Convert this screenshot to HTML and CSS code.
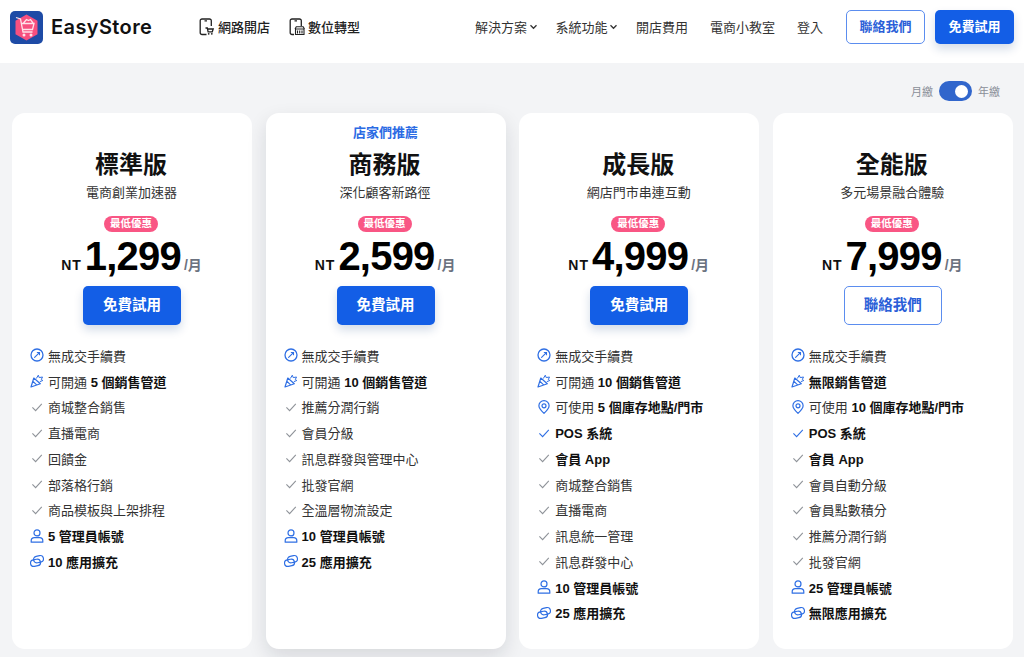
FILE: index.html
```html
<!DOCTYPE html>
<html lang="zh-Hant">
<head>
<meta charset="utf-8">
<title>EasyStore</title>
<link rel="stylesheet" href="styles.css">
</head>
<body>
<svg class="defs" width="0" height="0" aria-hidden="true">
  <symbol id="i-fee" viewBox="0 0 14 14"><circle cx="7" cy="7" r="6" fill="none" stroke="currentColor" stroke-width="1.3"/><path d="M4.600 9.400 9.400 4.600M7.300 4.500h2.200v2.200" fill="none" stroke="currentColor" stroke-width="1.100" stroke-linecap="round"/></symbol>
  <symbol id="i-horn" viewBox="0 0 14 14"><path d="M1 13 3.800 4 10.300 9.800zM3 7.400l3.600 3.500" fill="none" stroke="currentColor" stroke-width="1.200" stroke-linejoin="round"/><path d="M6.500 4.200l1.800-3 .9 2.400 3.300-.6-1.200 2.500 1.500 1-2.600 1" fill="none" stroke="currentColor" stroke-width="1" stroke-linejoin="round" stroke-linecap="round"/></symbol>
  <symbol id="i-pin" viewBox="0 0 14 14"><path d="M7 13.400C4.400 11 1.900 8.500 1.900 5.800a5.100 5.100 0 0 1 10.200 0C12.100 8.500 9.600 11 7 13.400z" fill="none" stroke="currentColor" stroke-width="1.200"/><circle cx="7" cy="5.800" r="2" fill="none" stroke="currentColor" stroke-width="1.200"/></symbol>
  <symbol id="i-check" viewBox="0 0 14 14"><path d="M2.400 7.400 5.600 10.600 11.800 3.800" fill="none" stroke="currentColor" stroke-width="1.100"/></symbol>
  <symbol id="i-user" viewBox="0 0 14 14"><circle cx="7" cy="3.900" r="3" fill="none" stroke="currentColor" stroke-width="1.200"/><path d="M1.200 13.200v-1.500c0-1.900 1.500-3.100 3.200-3.100h5.200c1.700 0 3.200 1.200 3.200 3.100v1.500z" fill="none" stroke="currentColor" stroke-width="1.200" stroke-linejoin="round"/></symbol>
  <symbol id="i-apps" viewBox="0 0 14 14"><rect x="3.500" y="1.900" width="10" height="6.600" rx="3.300" transform="rotate(-12 8.500 5.200)" fill="none" stroke="currentColor" stroke-width="1.200"/><rect x=".5" y="5.500" width="10" height="6.600" rx="3.300" transform="rotate(-12 5.500 8.800)" fill="none" stroke="currentColor" stroke-width="1.200"/></symbol>
  <symbol id="i-chev" viewBox="0 0 8 6"><path d="M1 1.300 4 4.300 7 1.300" fill="none" stroke="currentColor" stroke-width="1.300"/></symbol>
</svg>

<header class="topbar">
  <a class="brand">
    <span class="brand-mark">
      <svg viewBox="0 0 33 33" width="33" height="33">
        <rect width="33" height="33" rx="5" fill="#1e4ba6"/>
        <path d="M16.500 3.500 27.500 9.800v13.400L16.500 29.500 5.500 23.200V9.800z" fill="#f7507f"/>
        <path d="M6 6.500l4.500 1.500 2.500 13h9.500M11.500 12.500h12.500l-1.500 6H12.500M13.500 12l3-3.500 2 1 2-1 2.500 3.500" fill="none" stroke="#ffe3ea" stroke-width="1.300"/>
        <circle cx="14" cy="24" r="1.500" fill="#ffe3ea"/><circle cx="21" cy="24" r="1.500" fill="#ffe3ea"/>
      </svg>
    </span>
    <span class="brand-name">EasyStore</span>
  </a>
  <nav class="nav-left">
    <a class="nav-strong">
      <svg viewBox="0 0 16 18" width="16" height="18"><path d="M7.500 16.500H3a1.800 1.800 0 0 1-1.800-1.800V2.800A1.800 1.800 0 0 1 3 1h7.500a1.800 1.800 0 0 1 1.800 1.800V8M5.500 2.800h2.500" fill="none" stroke="#222" stroke-width="1.300"/><path d="M6.500 10h1.800l.8 3.800h4.200l.9-2.800H8.600" fill="none" stroke="#222" stroke-width="1.300"/><circle cx="9.700" cy="15.800" r=".9" fill="#222"/><circle cx="12.800" cy="15.800" r=".9" fill="#222"/></svg>
      網路開店
    </a>
    <a class="nav-strong">
      <svg viewBox="0 0 16 18" width="16" height="18"><path d="M5 16.500H3a1.800 1.800 0 0 1-1.800-1.800V2.800A1.800 1.800 0 0 1 3 1h7.500a1.800 1.800 0 0 1 1.800 1.800V8M5.500 2.800h2.500" fill="none" stroke="#222" stroke-width="1.300"/><path d="M6.500 11h8.500v5.500H6.500zM6 11l1.300-2.200h6.900L15.500 11M8.500 12.500v3M10.700 12.500v3M13 12.500v3" fill="none" stroke="#222" stroke-width="1.100"/></svg>
      數位轉型
    </a>
  </nav>
  <nav class="nav-right">
    <a class="nav-link">解決方案<svg class="chev"><use href="#i-chev"/></svg></a>
    <a class="nav-link">系統功能<svg class="chev"><use href="#i-chev"/></svg></a>
    <a class="nav-link">開店費用</a>
    <a class="nav-link">電商小教室</a>
    <a class="nav-link">登入</a>
  </nav>
  <a class="btn btn-outline btn-nav">聯絡我們</a>
  <a class="btn btn-solid btn-nav">免費試用</a>
</header>

<main class="page">
  <div class="billing">
    <span>月繳</span>
    <span class="switch"><span class="knob"></span></span>
    <span>年繳</span>
  </div>

  <section class="plans">
    <article class="card">
      <h2>標準版</h2>
      <p class="tagline">電商創業加速器</p>
      <span class="badge">最低優惠</span>
      <div class="price"><span class="cur">NT</span><span class="amount">1,299</span><span class="per">/月</span></div>
      <a class="btn btn-solid btn-cta">免費試用</a>
      <ul class="features">
        <li><svg class="ico blue"><use href="#i-fee"/></svg>無成交手續費</li>
        <li><svg class="ico blue"><use href="#i-horn"/></svg><span>可開通 <b>5 個銷售管道</b></span></li>
        <li><svg class="ico gray"><use href="#i-check"/></svg>商城整合銷售</li>
        <li><svg class="ico gray"><use href="#i-check"/></svg>直播電商</li>
        <li><svg class="ico gray"><use href="#i-check"/></svg>回饋金</li>
        <li><svg class="ico gray"><use href="#i-check"/></svg>部落格行銷</li>
        <li><svg class="ico gray"><use href="#i-check"/></svg>商品模板與上架排程</li>
        <li><svg class="ico blue"><use href="#i-user"/></svg><b>5 管理員帳號</b></li>
        <li><svg class="ico blue"><use href="#i-apps"/></svg><b>10 應用擴充</b></li>
      </ul>
    </article>

    <article class="card featured">
      <span class="ribbon">店家們推薦</span>
      <h2>商務版</h2>
      <p class="tagline">深化顧客新路徑</p>
      <span class="badge">最低優惠</span>
      <div class="price"><span class="cur">NT</span><span class="amount">2,599</span><span class="per">/月</span></div>
      <a class="btn btn-solid btn-cta">免費試用</a>
      <ul class="features">
        <li><svg class="ico blue"><use href="#i-fee"/></svg>無成交手續費</li>
        <li><svg class="ico blue"><use href="#i-horn"/></svg><span>可開通 <b>10 個銷售管道</b></span></li>
        <li><svg class="ico gray"><use href="#i-check"/></svg>推薦分潤行銷</li>
        <li><svg class="ico gray"><use href="#i-check"/></svg>會員分級</li>
        <li><svg class="ico gray"><use href="#i-check"/></svg>訊息群發與管理中心</li>
        <li><svg class="ico gray"><use href="#i-check"/></svg>批發官網</li>
        <li><svg class="ico gray"><use href="#i-check"/></svg>全溫層物流設定</li>
        <li><svg class="ico blue"><use href="#i-user"/></svg><b>10 管理員帳號</b></li>
        <li><svg class="ico blue"><use href="#i-apps"/></svg><b>25 應用擴充</b></li>
      </ul>
    </article>

    <article class="card">
      <h2>成長版</h2>
      <p class="tagline">網店門市串連互動</p>
      <span class="badge">最低優惠</span>
      <div class="price"><span class="cur">NT</span><span class="amount">4,999</span><span class="per">/月</span></div>
      <a class="btn btn-solid btn-cta">免費試用</a>
      <ul class="features">
        <li><svg class="ico blue"><use href="#i-fee"/></svg>無成交手續費</li>
        <li><svg class="ico blue"><use href="#i-horn"/></svg><span>可開通 <b>10 個銷售管道</b></span></li>
        <li><svg class="ico blue"><use href="#i-pin"/></svg><span>可使用 <b>5 個庫存地點/門市</b></span></li>
        <li><svg class="ico blue"><use href="#i-check"/></svg><b>POS 系統</b></li>
        <li><svg class="ico gray"><use href="#i-check"/></svg><b>會員 App</b></li>
        <li><svg class="ico gray"><use href="#i-check"/></svg>商城整合銷售</li>
        <li><svg class="ico gray"><use href="#i-check"/></svg>直播電商</li>
        <li><svg class="ico gray"><use href="#i-check"/></svg>訊息統一管理</li>
        <li><svg class="ico gray"><use href="#i-check"/></svg>訊息群發中心</li>
        <li><svg class="ico blue"><use href="#i-user"/></svg><b>10 管理員帳號</b></li>
        <li><svg class="ico blue"><use href="#i-apps"/></svg><b>25 應用擴充</b></li>
      </ul>
    </article>

    <article class="card">
      <h2>全能版</h2>
      <p class="tagline">多元場景融合體驗</p>
      <span class="badge">最低優惠</span>
      <div class="price"><span class="cur">NT</span><span class="amount">7,999</span><span class="per">/月</span></div>
      <a class="btn btn-outline btn-cta">聯絡我們</a>
      <ul class="features">
        <li><svg class="ico blue"><use href="#i-fee"/></svg>無成交手續費</li>
        <li><svg class="ico blue"><use href="#i-horn"/></svg><b>無限銷售管道</b></li>
        <li><svg class="ico blue"><use href="#i-pin"/></svg><span>可使用 <b>10 個庫存地點/門市</b></span></li>
        <li><svg class="ico blue"><use href="#i-check"/></svg><b>POS 系統</b></li>
        <li><svg class="ico gray"><use href="#i-check"/></svg><b>會員 App</b></li>
        <li><svg class="ico gray"><use href="#i-check"/></svg>會員自動分級</li>
        <li><svg class="ico gray"><use href="#i-check"/></svg>會員點數積分</li>
        <li><svg class="ico gray"><use href="#i-check"/></svg>推薦分潤行銷</li>
        <li><svg class="ico gray"><use href="#i-check"/></svg>批發官網</li>
        <li><svg class="ico blue"><use href="#i-user"/></svg><b>25 管理員帳號</b></li>
        <li><svg class="ico blue"><use href="#i-apps"/></svg><b>無限應用擴充</b></li>
      </ul>
    </article>
  </section>
</main>
</body>
</html>
```
FILE: styles.css
```css
* { box-sizing: border-box; }
html, body { margin: 0; height: 100%; }
body {
  background: #f3f4f6;
  color: #111827;
  font-family: "Liberation Sans", "Noto Sans CJK TC", sans-serif;
  overflow: hidden;
}
.defs { position: absolute; }
a { color: inherit; text-decoration: none; }

.topbar {
  height: 63px;
  background: #fff;
  display: flex;
  align-items: center;
  padding: 0 10px 9px 10px;
}
.brand { display: flex; align-items: center; gap: 8px; width: 189px; }
.brand-mark { display: block; width: 33px; height: 33px; }
.brand-name {
  font-family: Inter, "Liberation Sans", sans-serif;
  font-size: 20px;
  font-weight: 600;
  letter-spacing: .4px;
  color: #111;
}
.nav-left { display: flex; gap: 19px; padding-bottom: 2px; }
.nav-strong {
  display: flex;
  align-items: center;
  gap: 3px;
  font-size: 13px;
  font-weight: 500;
  color: #222;
}
.nav-strong svg { margin-top: 2px; }
.nav-right {
  display: flex;
  align-items: center;
  gap: 22px;
  margin-left: auto;
  margin-right: 23px;
  padding-bottom: 2px;
}
.nav-link {
  display: flex;
  align-items: center;
  gap: 2px;
  font-size: 13px;
  color: #333;
}
.nav-link:nth-child(-n+2) { margin-right: -4.5px; }
.chev { width: 9px; height: 6px; margin-top: 2px; }

.btn {
  display: flex;
  align-items: center;
  justify-content: center;
  border-radius: 5px;
  font-weight: 700;
  padding-bottom: 3px;
}
.btn-solid {
  background: #135ee6;
  color: #fff;
  box-shadow: 0 5px 10px rgba(19, 60, 130, .18);
}
.btn-outline {
  background: #fff;
  color: #2b5fd8;
  border: 1px solid #5b8def;
}
.btn-nav { width: 79px; height: 34px; font-size: 13px; }
.btn-nav.btn-outline { margin-right: 10px; }
.btn-cta { width: 98px; height: 39px; font-size: 14.5px; padding-bottom: 5px; }

.page { padding: 0 10px 0 12px; }
.billing {
  height: 50px;
  padding: 6px 14px 0 0;
  display: flex;
  align-items: center;
  justify-content: flex-end;
  gap: 6px;
  font-size: 11px;
  color: #8a8f98;
}
.switch {
  width: 33px;
  height: 20px;
  border-radius: 10px;
  background: #3166cc;
  display: flex;
  align-items: center;
  justify-content: flex-end;
  padding-right: 4px;
}
.knob { width: 13px; height: 13px; border-radius: 50%; background: #fff; }

.plans {
  display: grid;
  grid-template-columns: repeat(4, 240px);
  column-gap: 13.6px;
}
.card {
  position: relative;
  height: 536px;
  background: #fff;
  border-radius: 13px;
  padding-top: 37px;
  display: flex;
  flex-direction: column;
  align-items: center;
}
.card.featured { box-shadow: 0 8px 20px rgba(17, 24, 39, .12); }
.ribbon {
  position: absolute;
  top: 9px;
  left: 0;
  right: 0;
  text-align: center;
  font-size: 13px;
  font-weight: 700;
  color: #2b6be4;
}
.card h2 { margin: 0 2px 0 0; font-size: 24px; line-height: 30px; font-weight: 700; color: #111; }
.tagline { margin: 4px 1px 0 0; font-size: 13px; line-height: 18px; color: #333; }
.badge {
  margin: 14px 2px 0 0;
  width: 54px;
  height: 16px;
  border-radius: 8px;
  background: #f95684;
  color: #fff;
  font-size: 10.5px;
  font-weight: 700;
  line-height: 15px;
  text-align: center;
}
.price { display: flex; align-items: baseline; height: 46px; padding-top: 1px; margin-right: 1px; }
.cur { font-size: 14px; font-weight: 700; letter-spacing: 1px; margin-right: 3px; color: #111; }
.amount { font-size: 40px; line-height: 47px; font-weight: 700; letter-spacing: -.8px; color: #000; }
.per { font-size: 14px; font-weight: 700; color: #6b7280; margin-left: 3px; }
.btn-cta { margin-top: 8px; }

.features {
  list-style: none;
  margin: 17.5px 0 0;
  padding: 0 0 0 18px;
  width: 100%;
}
.features li {
  display: flex;
  align-items: center;
  gap: 4px;
  height: 25.75px;
  font-size: 13px;
  color: #333;
  white-space: nowrap;
}
.features b { font-weight: 700; color: #111; }
.ico { width: 14px; height: 14px; flex: none; }
.ico.blue { color: #2f6fe4; }
.ico.gray { color: #8f9399; }
```
